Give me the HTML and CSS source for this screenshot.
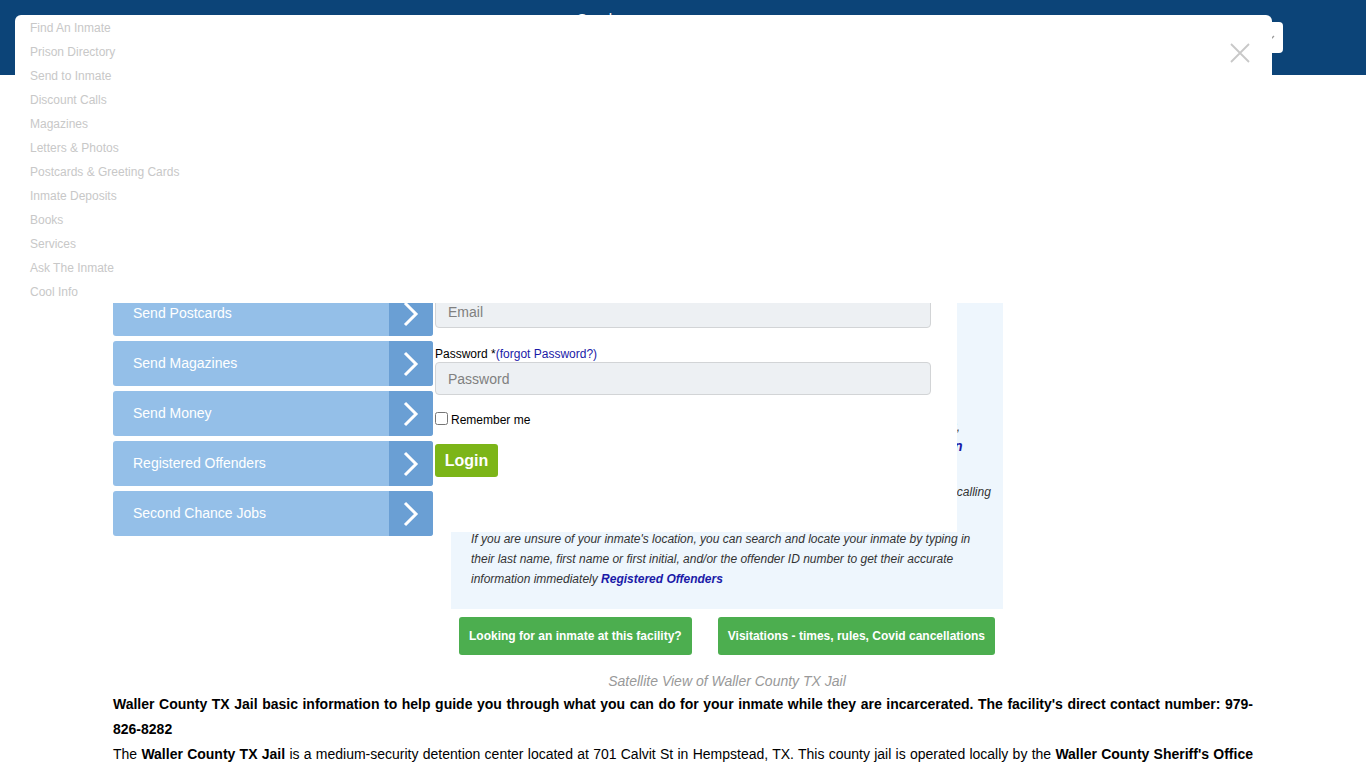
FILE: index.html
```html
<!DOCTYPE html>
<html lang="en">
<head>
    <meta charset="UTF-8">
    <meta name="viewport" content="width=device-width, initial-scale=1.0">
    <title>Waller County TX Jail</title>
    <link rel="stylesheet" href="styles.css">
</head>
<body>

    <!-- Top blue bar -->
    <header class="topbar">
        <span class="topbar-link">Send</span>
        <div class="topbar-search">
            <svg class="search-caret" width="10" height="6" viewBox="0 0 10 6"><path d="M1 1 L5 5 L9 1" fill="none" stroke="#9a9a9a" stroke-width="1.3"/></svg>
        </div>
    </header>

    <!-- Open menu popup -->
    <div class="menu-popup">
        <ul class="menu-links">
            <li><a href="#">Find An Inmate</a></li>
            <li><a href="#">Prison Directory</a></li>
            <li><a href="#">Send to Inmate</a></li>
            <li><a href="#">Discount Calls</a></li>
            <li><a href="#">Magazines</a></li>
            <li><a href="#">Letters &amp; Photos</a></li>
            <li><a href="#">Postcards &amp; Greeting Cards</a></li>
            <li><a href="#">Inmate Deposits</a></li>
            <li><a href="#">Books</a></li>
            <li><a href="#">Services</a></li>
            <li><a href="#">Ask The Inmate</a></li>
            <li><a href="#">Cool Info</a></li>
        </ul>
        <span class="menu-close">
            <svg width="20" height="20" viewBox="0 0 20 20"><path d="M1 1 L19 19 M19 1 L1 19" stroke="#c8c8c8" stroke-width="1.8"/></svg>
        </span>
    </div>

    <main class="page">
        <div class="facility-row">

            <div class="side-links">
                <a href="#" class="side-link"><span class="side-text">Send Postcards</span><span class="side-arrow"><svg width="16" height="26" viewBox="0 0 16 26"><path d="M2 2 L13 13 L2 24" fill="none" stroke="#fff" stroke-width="3"/></svg></span></a>
                <a href="#" class="side-link"><span class="side-text">Send Magazines</span><span class="side-arrow"><svg width="16" height="26" viewBox="0 0 16 26"><path d="M2 2 L13 13 L2 24" fill="none" stroke="#fff" stroke-width="3"/></svg></span></a>
                <a href="#" class="side-link"><span class="side-text">Send Money</span><span class="side-arrow"><svg width="16" height="26" viewBox="0 0 16 26"><path d="M2 2 L13 13 L2 24" fill="none" stroke="#fff" stroke-width="3"/></svg></span></a>
                <a href="#" class="side-link"><span class="side-text">Registered Offenders</span><span class="side-arrow"><svg width="16" height="26" viewBox="0 0 16 26"><path d="M2 2 L13 13 L2 24" fill="none" stroke="#fff" stroke-width="3"/></svg></span></a>
                <a href="#" class="side-link"><span class="side-text">Second Chance Jobs</span><span class="side-arrow"><svg width="16" height="26" viewBox="0 0 16 26"><path d="M2 2 L13 13 L2 24" fill="none" stroke="#fff" stroke-width="3"/></svg></span></a>
            </div>

            <div class="facility-main">
                <div class="info-box">
                    <h3 class="info-title">Waller County TX Jail</h3>
                    <p class="info-text">
                        Do you need to find an inmate at this jail, send them a letter, photos or a<br>
                        magazine, put money on their books, or set up a phone account for them?<br>
                        We have all the information you need, from the jail's address and phone<br>
                        number to the visitation rules, mail policies and commissary deposits.<br>
                        Are you looking for their bail amount, charges, court dates, release dates or booking photo?,
                    </p>
                    <p class="info-link-line"><a href="#">Find an inmate and learn more about the booking, charge and registration</a></p>
                    <p class="info-text info-gap">
                        Save up to 80% on inmate calls with a local phone number so that your<br>
                        inmate can call you for much less than the jail's standard rates, with no contracts, or collect-calling<br>
                        plans or hidden fees.
                    </p>
                    <p class="info-text info-last">
                        If you are unsure of your inmate's location, you can search and locate your inmate by typing in<br>
                        their last name, first name or first initial, and/or the offender ID number to get their accurate<br>
                        information immediately <a href="#">Registered Offenders</a>
                    </p>
                </div>

                <div class="action-row">
                    <a href="#" class="action-btn">Looking for an inmate at this facility?</a>
                    <a href="#" class="action-btn">Visitations - times, rules, Covid cancellations</a>
                </div>

                <p class="map-caption">Satellite View of Waller County TX Jail</p>
            </div>

            <!-- Login popup over the info box -->
            <form class="login-popup">
                <label class="login-label">Email *</label>
                <input type="text" class="login-input" placeholder="Email">
                <label class="login-label login-label-pw">Password *<a href="#">(forgot Password?)</a></label>
                <input type="password" class="login-input" placeholder="Password">
                <label class="remember"><input type="checkbox"> Remember me</label>
                <button type="button" class="login-btn">Login</button>
            </form>
        </div>

        <div class="facility-text">
            <p class="lead">Waller County TX Jail basic information to help guide you through what you can do for your inmate while they are incarcerated. The facility's direct contact number: 979-826-8282</p>
            <p>The <b>Waller County TX Jail</b> is a medium-security detention center located at 701 Calvit St in Hempstead, TX. This county jail is operated locally by the <b>Waller County Sheriff's Office</b> and holds inmates who are awaiting trial or sentencing, or who have been sentenced to less than two years.</p>
        </div>
    </main>

</body>
</html>
```

FILE: styles.css
```css
body {
    margin: 0;
    font-family: "Liberation Sans", Arial, sans-serif;
    background: #fff;
    color: #000;
}

/* top bar */
.topbar {
    display: flex;
    align-items: flex-start;
    height: 75px;
    background-color: #0c4478;
    padding-left: 577px;
}

.topbar-link {
    color: #fff;
    font-size: 15px;
    line-height: 18px;
    padding-top: 10px;
}

.topbar-search {
    display: flex;
    align-items: center;
    justify-content: flex-end;
    margin-left: auto;
    margin-right: 83px;
    margin-top: 22px;
    width: 180px;
    height: 31px;
    padding-right: 8px;
    box-sizing: border-box;
    background: #fff;
    border-radius: 4px;
}

/* menu popup */
.menu-popup {
    position: absolute;
    left: 15px;
    top: 15px;
    width: 1257px;
    height: 288px;
    background: #fff;
    border-radius: 6px 6px 0 0;
    z-index: 10;
}

.menu-links {
    list-style: none;
    margin: 0;
    padding: 1px 0 0 15px;
}

.menu-links li {
    font-size: 12px;
    line-height: 24px;
}

.menu-links a {
    color: #c8c8c8;
    text-decoration: none;
}

.menu-close {
    position: absolute;
    top: 28px;
    right: 22px;
    width: 20px;
    height: 20px;
}

/* page */
.page {
    width: 1140px;
    margin: 0 auto;
    padding-top: 216px;
}

.facility-row {
    position: relative;
    display: flex;
    gap: 18px;
}

.side-links {
    display: flex;
    flex-direction: column;
    gap: 5px;
    width: 320px;
}

.side-link {
    display: flex;
    height: 45px;
    background-color: #94bfe8;
    border-radius: 3px;
    overflow: hidden;
    text-decoration: none;
}

.side-text {
    flex: 1;
    display: flex;
    align-items: center;
    padding-left: 20px;
    padding-bottom: 1px;
    color: #fff;
    font-size: 14px;
}

.side-arrow {
    display: flex;
    align-items: center;
    justify-content: center;
    width: 44px;
    background-color: #6a9fd4;
}

.facility-main {
    width: 552px;
}

.info-box {
    background-color: #eef6fd;
    padding: 20px 10px 20px 20px;
}

.info-title {
    margin: 0;
    font-size: 18px;
    line-height: 26px;
    color: #333;
}

.info-text {
    margin: 0;
    font-size: 12px;
    line-height: 20px;
    font-style: italic;
    color: #333;
    white-space: nowrap;
}

.info-text a,
.info-link-line a {
    color: #1a1aa8;
    font-weight: bold;
    text-decoration: none;
}

.info-link-line {
    margin: 0;
    font-size: 14px;
    line-height: 18px;
    font-style: italic;
    white-space: nowrap;
}

.info-gap {
    margin-top: 7px;
}

.info-last {
    margin-top: 7px;
}

.action-row {
    display: flex;
    justify-content: space-between;
    padding: 0 8px;
    margin-top: 8px;
}

.action-btn {
    display: flex;
    align-items: center;
    height: 38px;
    padding: 0 10px;
    background-color: #4cae4f;
    border-radius: 3px;
    color: #fff;
    font-size: 12px;
    font-weight: bold;
    text-decoration: none;
}

.map-caption {
    margin: 16px 0 0;
    text-align: center;
    font-size: 14px;
    line-height: 20px;
    font-style: italic;
    color: #999;
}

/* login popup */
.login-popup {
    position: absolute;
    left: 320px;
    top: -44px;
    width: 524px;
    height: 285px;
    padding: 28px 0 0 2px;
    box-sizing: border-box;
    background: #fff;
    font-size: 12px;
}

.login-label {
    display: block;
    line-height: 20px;
    color: #000;
}

.login-label a {
    color: #1a1aa8;
    text-decoration: none;
}

.login-label-pw {
    line-height: 18px;
    margin-top: 17px;
    margin-bottom: -1px;
}

.login-input {
    display: block;
    width: 496px;
    height: 33px;
    box-sizing: border-box;
    padding: 0 12px;
    border: 1px solid #d2d4d6;
    border-radius: 4px;
    background-color: #edf0f3;
    font-family: "Liberation Sans", Arial, sans-serif;
    font-size: 14px;
}

.login-input::placeholder {
    color: #808080;
}

.remember {
    display: flex;
    align-items: center;
    margin-top: 16px;
    line-height: 18px;
    font-size: 12px;
}

.remember input {
    margin: -3px 3px 0 0;
    width: 13px;
    height: 13px;
}

.login-btn {
    display: block;
    margin-top: 15px;
    width: 63px;
    height: 33px;
    border: none;
    border-radius: 3px;
    background-color: #7cb518;
    color: #fff;
    font-family: "Liberation Sans", Arial, sans-serif;
    font-size: 16px;
    font-weight: bold;
}

/* text below */
.facility-text p {
    margin: 0;
    font-size: 14px;
    line-height: 25px;
    text-align: justify;
}

.facility-text .lead {
    font-weight: bold;
    margin-top: 1px;
}
```
